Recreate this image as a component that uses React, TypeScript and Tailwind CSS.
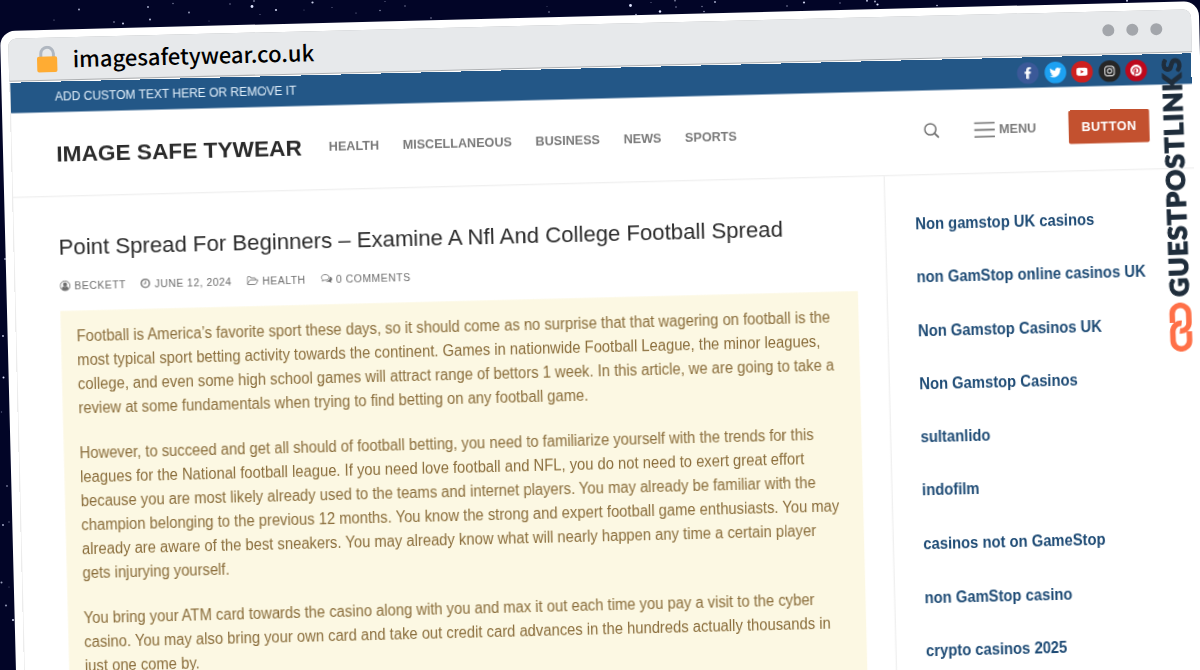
import type { ReactNode } from "react";
import {
  FaFacebookF,
  FaInstagram,
  FaPinterest,
  FaTwitter,
  FaYoutube,
} from "react-icons/fa";

const navItems = ["HEALTH", "MISCELLANEOUS", "BUSINESS", "NEWS", "SPORTS"];

const socials = [
  { name: "Facebook", icon: <FaFacebookF />, className: "bg-[#3b5998]" },
  { name: "Twitter", icon: <FaTwitter />, className: "bg-[#1da1f2]" },
  { name: "YouTube", icon: <FaYoutube />, className: "bg-[#cd201f]" },
  { name: "Instagram", icon: <FaInstagram />, className: "bg-[#262626]" },
  { name: "Pinterest", icon: <FaPinterest />, className: "bg-[#bd081c]" },
];

const sidebarLinks = [
  "Non gamstop UK casinos",
  "non GamStop online casinos UK",
  "Non Gamstop Casinos UK",
  "Non Gamstop Casinos",
  "sultanlido",
  "indofilm",
  "casinos not on GameStop",
  "non GamStop casino",
  "crypto casinos 2025",
];

const paragraphs = [
  [
    "Football is America’s favorite sport these days, so it should come as no surprise that that wagering on football is the",
    "most typical sport betting activity towards the continent. Games in nationwide Football League, the minor leagues,",
    "college, and even some high school games will attract range of bettors 1 week. In this article, we are going to take a",
    "review at some fundamentals when trying to find betting on any football game.",
  ],
  [
    "However, to succeed and get all should of football betting, you need to familiarize yourself with the trends for this",
    "leagues for the National football league. If you need love football and NFL, you do not need to exert great effort",
    "because you are most likely already used to the teams and internet players. You may already be familiar with the",
    "champion belonging to the previous 12 months. You know the strong and expert football game enthusiasts. You may",
    "already are aware of the best sneakers. You may already know what will nearly happen any time a certain player",
    "gets injurying yourself.",
  ],
  [
    "You bring your ATM card towards the casino along with you and max it out each time you pay a visit to the cyber",
    "casino. You may also bring your own card and take out credit card advances in the hundreds actually thousands in",
    "just one come by.",
  ],
];

// x, y, radius, opacity
const stars = [
  [79, 9.5, 0.9, 0.8], [54, 20, 0.6, 0.6], [114, 22, 0.8, 0.7], [123, 23.5, 1, 0.9],
  [148, 7, 0.9, 0.8], [150, 19.5, 0.9, 0.9], [173, 3.5, 0.7, 0.6], [189, 12.5, 0.9, 0.7],
  [209, 21, 0.6, 0.4], [230, 4, 0.7, 0.6], [252, 6.5, 1.4, 1], [254, 1, 0.8, 0.8],
  [260, 14.5, 0.6, 0.5], [276, 10, 1.1, 0.9], [304, 10, 0.6, 0.4], [312.5, 2.5, 1.1, 0.9],
  [332, 7.5, 0.6, 0.5], [356, 13, 0.6, 0.6], [380, 10.5, 0.8, 0.6], [385, 1.5, 0.6, 0.5],
  [405, 6, 0.8, 0.5], [431, 18, 0.7, 0.7], [547, 6.5, 0.6, 0.3], [549, 12, 0.8, 0.6],
  [630.5, 5.5, 1.4, 1], [636, 14.5, 0.8, 0.8], [651, 2.5, 0.6, 0.5], [660, 11.5, 1.2, 1],
  [675, 0.8, 0.8, 0.7], [676, 7, 0.7, 0.7], [702, 6.5, 0.7, 0.6], [704, 11.5, 0.8, 0.7],
  [715, 2, 0.9, 0.8], [787, 6, 0.8, 0.6], [804, 2.5, 1.1, 0.9], [840, 3, 0.7, 0.6],
  [867, 0.8, 0.9, 0.9], [875, 1.5, 0.9, 0.8], [877.5, 4.5, 1.1, 1], [937, 5.5, 0.8, 0.9],
  [1127, 0.8, 1, 0.9], [5, 259, 0.9, 0.7], [3, 336, 0.9, 0.9], [3.5, 377.5, 1, 1],
  [1.5, 412, 0.7, 0.4], [7, 486, 0.9, 0.5], [9, 522, 0.7, 0.5], [3, 525, 0.9, 0.8],
  [1.5, 582.5, 1, 0.7], [9, 587, 0.6, 0.4], [6, 605.5, 1.1, 0.6], [13, 620, 1, 1],
];

const Sky = () => (
  <svg className="absolute inset-0 h-full w-full" viewBox="0 0 1200 670">
    {stars.map(([x, y, r, o], i) => (
      <circle key={i} cx={x} cy={y} r={r} fill="#dfe4ff" opacity={o} />
    ))}
  </svg>
);

const LockIcon = () => (
  <svg className="h-[27px] w-[21px]" viewBox="0 0 21 27">
    <path
      d="M4.2 12V7.8a6.3 6.3 0 0 1 12.6 0V12"
      fill="none"
      stroke="#b0b7c0"
      strokeWidth="3"
    />
    <rect x="0.3" y="10.6" width="20.2" height="15.8" rx="2" fill="#ffac33" />
  </svg>
);

const ChromeBar = () => (
  <div className="rounded-t-lg rounded-b-[0.5px] bg-[#aeb0b2] pb-px">
    <div className="flex h-[42px] items-center rounded-t-lg rounded-b-[0.5px] bg-[#e7e9eb] pr-[29px] pl-[28px]">
      <LockIcon />
      <span className="mb-[2px] ml-[15px] font-['Noto_Sans_CJK_SC','Noto_Sans',sans-serif] text-[22px] leading-none font-medium whitespace-nowrap text-black">
        imagesafetywear.co.uk
      </span>
      <div className="mb-1 ml-auto flex gap-3">
        <span className="size-3 rounded-full bg-[#a3a6ab]" />
        <span className="size-3 rounded-full bg-[#a3a6ab]" />
        <span className="size-3 rounded-full bg-[#a3a6ab]" />
      </div>
    </div>
  </div>
);

const TopBar = () => (
  <div className="flex h-[31px] items-center justify-between rounded-[0.5px] bg-[#235787] px-[45px]">
    <span className="text-[12.2px] text-[#e3f0fb]">
      ADD CUSTOM TEXT HERE OR REMOVE IT
    </span>
    <div className="flex gap-[5.5px]">
      {socials.map((social) => (
        <a
          key={social.name}
          aria-label={social.name}
          className={`flex size-[22px] items-center justify-center rounded-full text-[12px] text-white ${social.className}`}
        >
          {social.icon}
        </a>
      ))}
    </div>
  </div>
);

const Header = () => (
  <header className="flex h-[86px] items-center border-b border-[#ebebeb] px-[45px]">
    <span className="text-[23px] font-bold whitespace-nowrap text-[#2b2b2b]">
      IMAGE SAFE TYWEAR
    </span>
    <nav className="mb-[2px] ml-[27.5px] flex gap-[24px] text-[12.8px] font-bold text-[#7a7a7a]">
      {navItems.map((item) => (
        <a key={item}>{item}</a>
      ))}
    </nav>
    <div className="-mr-px mb-[3px] ml-auto flex items-center text-[#6f6f6f]">
      <svg className="size-[16px]" viewBox="0 0 17 17" fill="none" stroke="currentColor" strokeWidth="1.6">
        <circle cx="7" cy="7" r="6" />
        <path d="M11.4 11.4 16 16" strokeWidth="2" />
      </svg>
      <svg className="ml-[35px] h-[17px] w-[21px]" viewBox="0 0 21 17" stroke="currentColor" strokeWidth="1.6">
        <path d="M0 1.5h21M0 8.5h21M0 15.5h21" />
      </svg>
      <span className="ml-1 text-[12.8px] font-bold text-[#7a7a7a]">MENU</span>
      <a className="ml-[33px] flex h-[34px] w-[82px] items-center justify-center rounded-[2px] bg-[#c3512f] text-[12.8px] font-bold tracking-[0.5px] text-white">
        BUTTON
      </a>
    </div>
  </header>
);

const MetaItem = ({ icon, children }: { icon: ReactNode; children: ReactNode }) => (
  <span className="flex items-center gap-1">
    {icon}
    {children}
  </span>
);

const PostMeta = () => (
  <div className="flex items-center gap-[15px] text-[10.6px] tracking-[0.5px] whitespace-nowrap text-[#6d6d6d]">
    <MetaItem
      icon={
        <svg className="size-[11px]" viewBox="0 0 12 12">
          <circle cx="6" cy="6" r="5.4" fill="none" stroke="currentColor" />
          <circle cx="6" cy="4.6" r="2.3" fill="currentColor" />
          <path d="M2.2 9.6c.2-2 1.2-3 2-3a3 3 0 0 0 3.6 0c.8 0 1.8 1 2 3a5.2 5.2 0 0 1-7.6 0Z" fill="currentColor" />
        </svg>
      }
    >
      BECKETT
    </MetaItem>
    <MetaItem
      icon={
        <svg className="size-[10px]" viewBox="0 0 12 12" fill="none" stroke="currentColor">
          <circle cx="6" cy="6" r="5" strokeWidth="1.7" />
          <path d="M6.3 3v3.4H4" strokeWidth="1.1" />
        </svg>
      }
    >
      JUNE 12, 2024
    </MetaItem>
    <MetaItem
      icon={
        <svg className="h-[10px] w-3" viewBox="0 0 14 11" fill="none" stroke="currentColor" strokeLinejoin="round">
          <path d="M.7 9.2V1.7q0-1 1-1h2.2q1 0 1 1V2.3h4.5q1 0 1 1v1.4M.7 9.6 3.3 5.3q.4-.6 1.1-.6h8.3q.9 0 .4.8L10.9 9.3q-.4.7-1.1.7H1.5q-.8 0-.8-.8" />
        </svg>
      }
    >
      HEALTH
    </MetaItem>
    <MetaItem
      icon={
        <svg className="h-[10px] w-3" viewBox="0 0 14 12">
          <path d="M5.5.8C8.2.8 10.2 2.3 10.2 4.2S8.2 7.6 5.5 7.6q-.7 0-1.3-.1Q3 8.5 1.6 8.7q.6-.8.7-1.9Q.8 5.8.8 4.2C.8 2.3 2.8.8 5.5.8Z" fill="none" stroke="currentColor" />
          <path d="M11.3 3.2q2.5 1.1 2.5 3.1 0 1.5-1.4 2.5.2 1.2.9 2-1.6-.1-2.9-1.2-2.6.5-4.5-.8 5.2-.2 5.4-4.6Z" fill="currentColor" />
        </svg>
      }
    >
      0 COMMENTS
    </MetaItem>
  </div>
);

const Article = () => (
  <main className="w-[885px] border-r border-[#ebebeb] pt-[37px] pl-[45px]">
    <h1 className="text-[22.5px] leading-[30px] whitespace-nowrap text-[#2b2b2b]">
      Point Spread For Beginners – Examine A Nfl And College Football Spread
    </h1>
    <div className="mt-[15.5px]">
      <PostMeta />
    </div>
    <div className="mt-[17.5px] h-[560px] w-[810px] rounded-[0.5px] bg-[#fcf8e3] px-4 pt-[14.5px]">
      <div className="origin-top-left scale-x-[0.9375] text-[16px] leading-[24.3px] text-[#8a6d3b]">
        {paragraphs.map((lines, i) => (
          <p key={i} className="mb-[21.5px] whitespace-nowrap">
            {lines.map((line) => (
              <span key={line} className="block">
                {line}
              </span>
            ))}
          </p>
        ))}
      </div>
    </div>
  </main>
);

const Sidebar = () => (
  <aside className="flex-1 pt-[38px] pl-[30px]">
    <ul className="origin-top-left scale-x-[0.9375] text-[16px] leading-[24px] font-bold whitespace-nowrap text-[#1e4b75]">
      {sidebarLinks.map((link) => (
        <li key={link} className="mb-[30.1px]">
          <a>{link}</a>
        </li>
      ))}
    </ul>
  </aside>
);

// Vertical brand mark floating over the right edge of the window
const Watermark = () => (
  <div className="absolute top-[352px] left-[1169.5px] flex h-[23px] origin-top-left -rotate-[92deg] items-center gap-[6px]">
    <svg className="h-[23px] w-[49px]" viewBox="0 0 49 23" fill="none" stroke="#ff7048" strokeWidth="5.5">
      <path d="M20 20H11a8.3 8.3 0 0 1 0-16.6h9a8.3 8.3 0 0 1 8.3 9.3" />
      <path d="M29 3.4h9a8.3 8.3 0 0 1 0 16.6h-9a8.3 8.3 0 0 1-8.3-9.3" />
    </svg>
    <span className="mb-[2px] font-['Lato',sans-serif] text-[26px] leading-none font-black tracking-[1.1px] whitespace-nowrap text-[#1f2d3b] [-webkit-text-stroke:1.2px_#1f2d3b]">
      GUESTPOSTLINKS
    </span>
  </div>
);

export default function App() {
  return (
    <div className="relative h-[670px] w-[1200px] overflow-hidden bg-[#020527] font-['Liberation_Sans',Arial,sans-serif]">
      <Sky />
      <div className="relative pt-[30.6px]">
        <div className="-ml-[0.4px] h-[760px] w-[1198.5px] origin-top-left -rotate-[1.43deg] rounded-[15px] bg-white p-2">
          <ChromeBar />
          <div className="mt-px h-[700px] w-[1200px] origin-top-left scale-[0.985] border-l border-[#ececec] bg-white">
            <TopBar />
            <Header />
            <div className="flex h-[584px]">
              <Article />
              <Sidebar />
            </div>
          </div>
        </div>
      </div>
      <Watermark />
    </div>
  );
}
